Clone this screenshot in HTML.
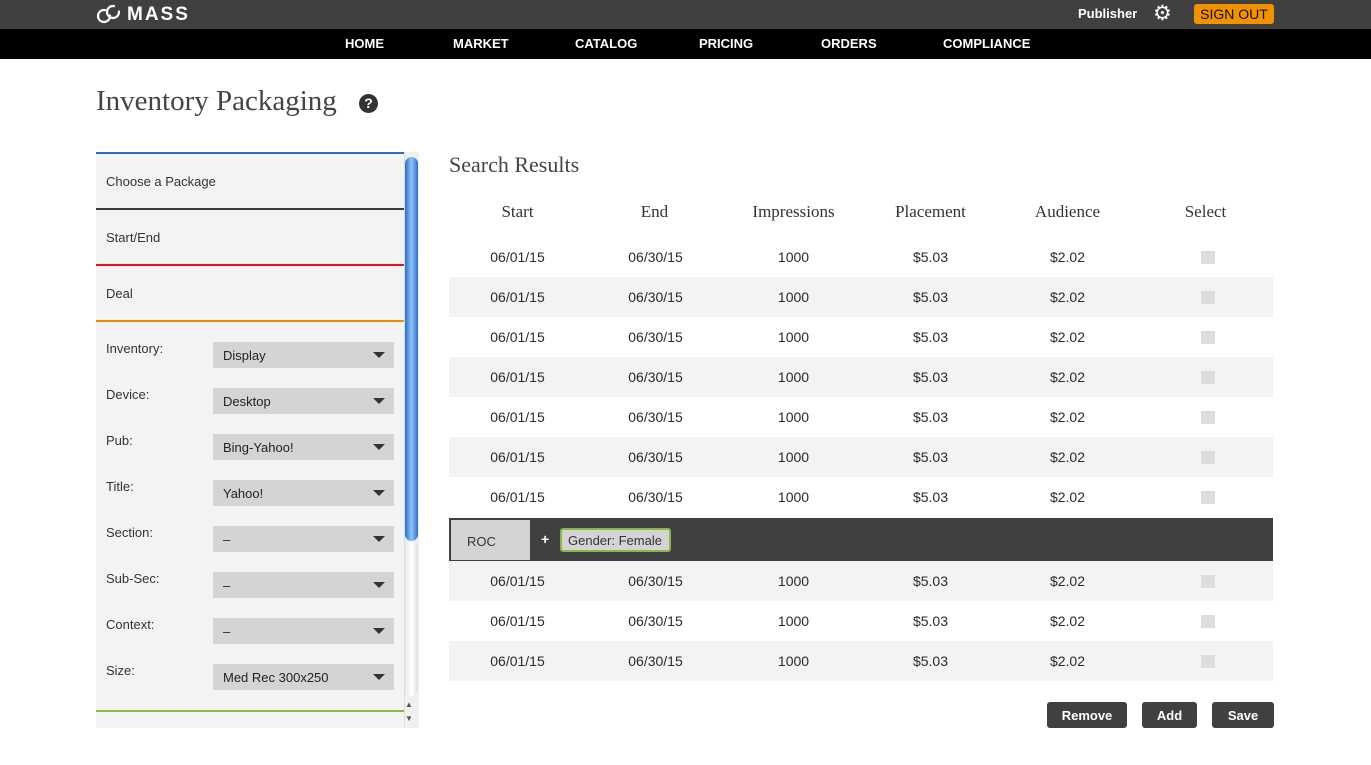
<!DOCTYPE html>
<html><head><style>
*{margin:0;padding:0;box-sizing:border-box}
body{width:1371px;height:765px;background:#fff;font-family:"Liberation Sans",sans-serif;color:#333;position:relative;overflow:hidden}
.abs{position:absolute}
.top{left:0;top:0;width:1371px;height:29px;background:#404040}
.nav{left:0;top:29px;width:1371px;height:30px;background:#000}
.nav span{position:absolute;top:7px;color:#fff;font-weight:bold;font-size:13px}
.serif{font-family:"Liberation Serif",serif}
.panel{left:96px;top:152px;width:308px;height:576px;background:#f3f3f3}
.sec{position:absolute;left:0;width:308px;height:56px;font-size:13px;padding:20px 0 0 10px;color:#333}
.lbl{position:absolute;left:10px;font-size:13px;color:#333}
.sel{position:absolute;left:117px;width:181px;height:26px;background:#d4d4d4;font-size:13px;padding:6px 0 0 10px;color:#222}
.sel:after{content:"";position:absolute;right:9px;top:10px;border-left:6px solid transparent;border-right:6px solid transparent;border-top:6px solid #333}
.row{position:absolute;left:449px;width:824px;height:40px;font-size:14px;color:#2a2a2a}
.row.g{background:#f3f3f3}
.row span{position:absolute;top:12px;width:137px;text-align:center}
.cb{position:absolute;left:752px;top:14px;width:14px;height:13px;background:#ddd}
.hd{position:absolute;top:202px;width:137px;text-align:center;font-size:17px;color:#333}
.btn{position:absolute;top:702px;height:26px;background:#404040;color:#fff;font-weight:bold;font-size:13px;border-radius:3px;text-align:center;padding-top:6px}
</style></head><body>
<div class="abs top"></div>
<svg class="abs" style="left:96px;top:4px" width="28" height="20" viewBox="0 0 28 20"><circle cx="8" cy="12" r="6" fill="none" stroke="#fff" stroke-width="2.2" stroke-dasharray="30 6"/><circle cx="17" cy="8" r="6" fill="none" stroke="#fff" stroke-width="2.2" stroke-dasharray="30 6"/></svg>
<div class="abs" style="left:127px;top:4px;color:#fff;font-size:19px;font-weight:bold;letter-spacing:2px">MASS</div>
<div class="abs" style="left:1078px;top:6px;color:#fff;font-weight:bold;font-size:13px">Publisher</div>
<div class="abs" style="left:1153px;top:3px;color:#fff;font-size:21px;line-height:22px">⚙</div>
<div class="abs" style="left:1194px;top:4px;width:80px;height:20px;background:#f39200;border-radius:3px;font-size:14px;color:#111;text-align:center;padding-top:2px">SIGN OUT</div>
<div class="abs nav"><span style="left:345px">HOME</span><span style="left:453px">MARKET</span><span style="left:575px">CATALOG</span><span style="left:699px">PRICING</span><span style="left:821px">ORDERS</span><span style="left:943px">COMPLIANCE</span></div>
<div class="abs serif" style="left:96px;top:85px;font-size:29px;color:#444">Inventory Packaging</div>
<div class="abs" style="left:359px;top:94px;width:19px;height:19px;border-radius:50%;background:#333;color:#fff;font-weight:bold;font-size:14px;text-align:center;line-height:19px">?</div>

<div class="abs panel">
<div class="sec" style="top:0;border-top:2px solid #2f6db5">Choose a Package</div>
<div class="sec" style="top:56px;border-top:2px solid #3a3a3a">Start/End</div>
<div class="sec" style="top:112px;border-top:2px solid #e3121e">Deal</div>
<div style="position:absolute;top:168px;left:0;width:308px;height:2px;background:#f08c00"></div>
<div class="lbl" style="top:189px">Inventory:</div><div class="sel" style="top:190px">Display</div>
<div class="lbl" style="top:235px">Device:</div><div class="sel" style="top:236px">Desktop</div>
<div class="lbl" style="top:281px">Pub:</div><div class="sel" style="top:282px">Bing-Yahoo!</div>
<div class="lbl" style="top:327px">Title:</div><div class="sel" style="top:328px">Yahoo!</div>
<div class="lbl" style="top:373px">Section:</div><div class="sel" style="top:374px">–</div>
<div class="lbl" style="top:419px">Sub-Sec:</div><div class="sel" style="top:420px">–</div>
<div class="lbl" style="top:465px">Context:</div><div class="sel" style="top:466px">–</div>
<div class="lbl" style="top:511px">Size:</div><div class="sel" style="top:512px">Med Rec 300x250</div>
<div style="position:absolute;top:558px;left:0;width:308px;height:2px;background:#8db64a"></div>
</div>
<div class="abs" style="left:404px;top:152px;width:15px;height:576px;background:#f0f0f0;border-left:1px solid #ddd"></div>
<div class="abs" style="left:405px;top:157px;width:13px;height:384px;border-radius:7px;background:linear-gradient(90deg,#2a6fd0,#8fc4f5 50%,#2a6fd0)"></div>
<div class="abs" style="left:405px;top:541px;width:13px;height:155px;border-radius:6px;background:linear-gradient(90deg,#e8e8e8,#fff 50%,#e0e0e0)"></div>
<div class="abs" style="left:405px;top:698px;font-size:8px;color:#555;line-height:14px">▲<br>▼</div>

<div class="abs serif" style="left:449px;top:152px;font-size:22px;color:#444">Search Results</div>
<div class="hd serif" style="left:449px">Start</div><div class="hd serif" style="left:586px">End</div><div class="hd serif" style="left:725px">Impressions</div><div class="hd serif" style="left:862px">Placement</div><div class="hd serif" style="left:999px">Audience</div><div class="hd serif" style="left:1137px">Select</div>

<div class="row" style="top:237px"><span style="left:0">06/01/15</span><span style="left:138px">06/30/15</span><span style="left:276px">1000</span><span style="left:413px">$5.03</span><span style="left:550px">$2.02</span><i class="cb"></i></div>
<div class="row g" style="top:277px"><span style="left:0">06/01/15</span><span style="left:138px">06/30/15</span><span style="left:276px">1000</span><span style="left:413px">$5.03</span><span style="left:550px">$2.02</span><i class="cb"></i></div>
<div class="row" style="top:317px"><span style="left:0">06/01/15</span><span style="left:138px">06/30/15</span><span style="left:276px">1000</span><span style="left:413px">$5.03</span><span style="left:550px">$2.02</span><i class="cb"></i></div>
<div class="row g" style="top:357px"><span style="left:0">06/01/15</span><span style="left:138px">06/30/15</span><span style="left:276px">1000</span><span style="left:413px">$5.03</span><span style="left:550px">$2.02</span><i class="cb"></i></div>
<div class="row" style="top:397px"><span style="left:0">06/01/15</span><span style="left:138px">06/30/15</span><span style="left:276px">1000</span><span style="left:413px">$5.03</span><span style="left:550px">$2.02</span><i class="cb"></i></div>
<div class="row g" style="top:437px"><span style="left:0">06/01/15</span><span style="left:138px">06/30/15</span><span style="left:276px">1000</span><span style="left:413px">$5.03</span><span style="left:550px">$2.02</span><i class="cb"></i></div>
<div class="row" style="top:477px"><span style="left:0">06/01/15</span><span style="left:138px">06/30/15</span><span style="left:276px">1000</span><span style="left:413px">$5.03</span><span style="left:550px">$2.02</span><i class="cb"></i></div>
<div class="abs" style="left:449px;top:518px;width:824px;height:43px;background:#404040"></div>
<div class="abs" style="left:451px;top:520px;width:79px;height:40px;background:#d4d4d4;font-size:13px;padding:14px 0 0 16px">ROC</div>
<div class="abs" style="left:541px;top:531px;color:#fff;font-weight:bold;font-size:14px">+</div>
<div class="abs" style="left:560px;top:528px;width:111px;height:24px;background:#d4d4d4;border:2px solid #8db64a;border-radius:3px;font-size:13px;padding:3px 0 0 6px;color:#333">Gender: Female</div>
<div class="row g" style="top:561px"><span style="left:0">06/01/15</span><span style="left:138px">06/30/15</span><span style="left:276px">1000</span><span style="left:413px">$5.03</span><span style="left:550px">$2.02</span><i class="cb"></i></div>
<div class="row" style="top:601px"><span style="left:0">06/01/15</span><span style="left:138px">06/30/15</span><span style="left:276px">1000</span><span style="left:413px">$5.03</span><span style="left:550px">$2.02</span><i class="cb"></i></div>
<div class="row g" style="top:641px"><span style="left:0">06/01/15</span><span style="left:138px">06/30/15</span><span style="left:276px">1000</span><span style="left:413px">$5.03</span><span style="left:550px">$2.02</span><i class="cb"></i></div>

<div class="btn" style="left:1047px;width:80px">Remove</div>
<div class="btn" style="left:1142px;width:55px">Add</div>
<div class="btn" style="left:1212px;width:62px">Save</div>
</body></html>
